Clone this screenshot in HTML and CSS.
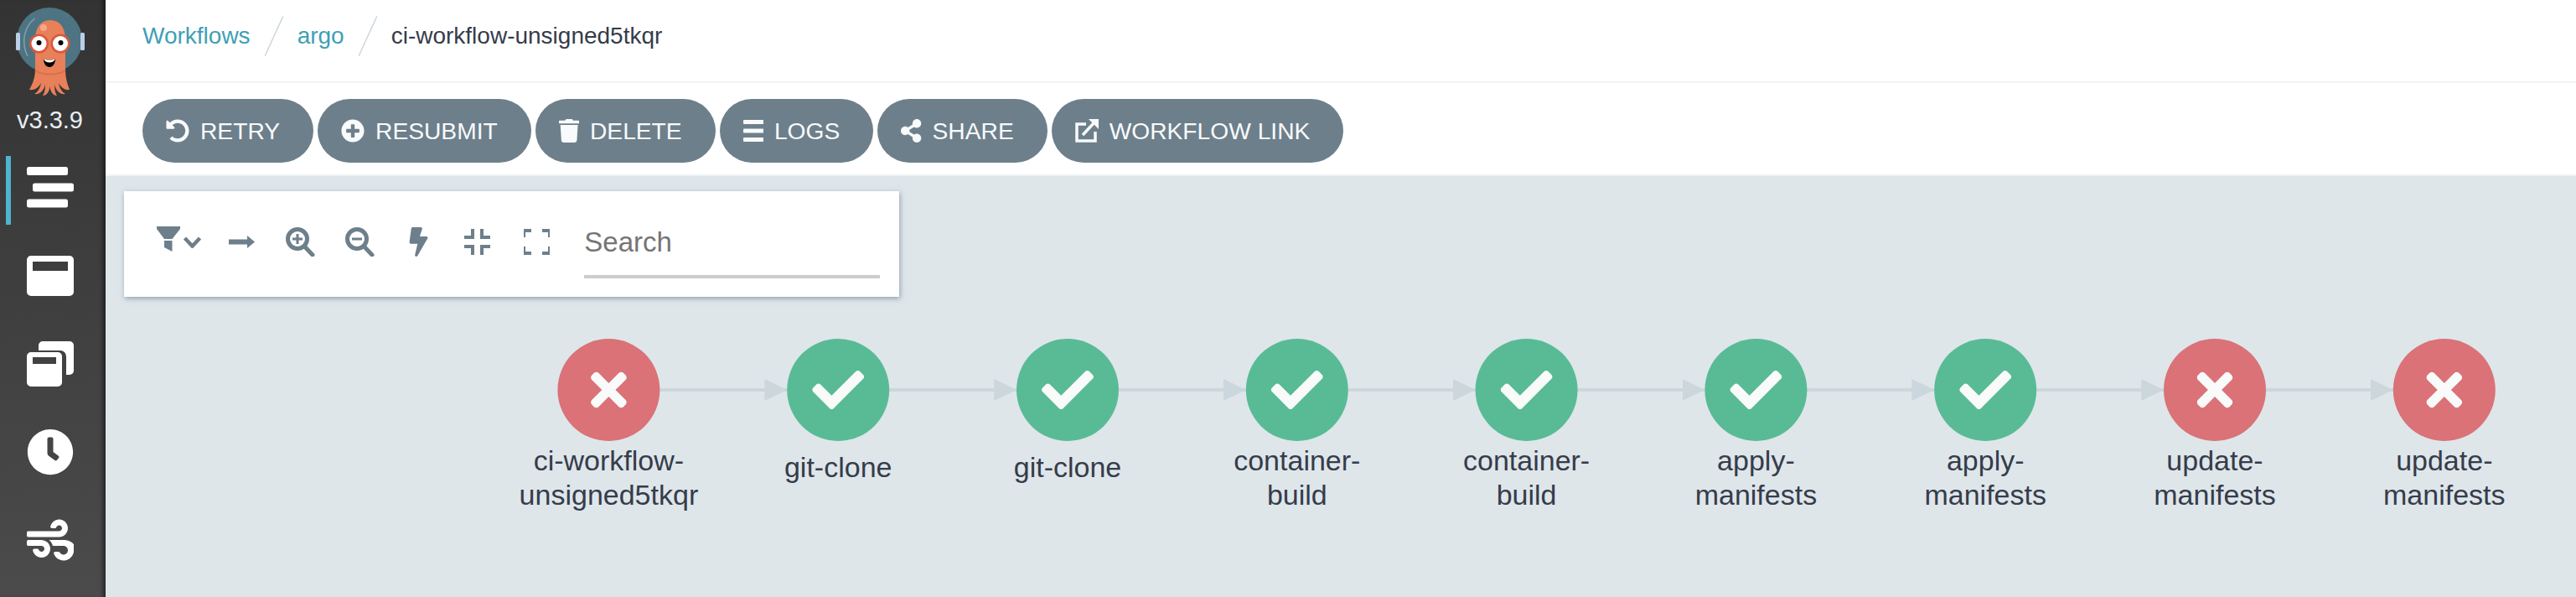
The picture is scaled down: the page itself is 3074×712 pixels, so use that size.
FILE: index.html
```html
<!DOCTYPE html>
<html lang="en">
<head>
<meta charset="utf-8">
<title>ci-workflow-unsigned5tkqr</title>
<link rel="stylesheet" href="styles.css">
</head>
<body>
<svg class="defs" width="0" height="0" aria-hidden="true">
  <symbol id="i-check" viewBox="0 0 512 512"><path d="M173.898 439.404l-166.4-166.4c-9.997-9.997-9.997-26.206 0-36.204l36.203-36.204c9.997-9.998 26.207-9.998 36.204 0L192 312.69 432.095 72.596c9.997-9.997 26.207-9.997 36.204 0l36.203 36.204c9.997 9.997 9.997 26.206 0 36.204l-294.4 294.401c-9.998 9.997-26.207 9.997-36.204-.001z"/></symbol>
  <symbol id="i-times" viewBox="0 0 352 512"><path d="M242.72 256l100.07-100.07c12.28-12.28 12.28-32.19 0-44.48l-22.24-22.24c-12.28-12.28-32.19-12.28-44.48 0L176 189.28 75.93 89.21c-12.28-12.28-32.19-12.28-44.48 0L9.21 111.45c-12.28 12.28-12.28 32.19 0 44.48L109.28 256 9.21 356.07c-12.28 12.28-12.28 32.19 0 44.48l22.24 22.24c12.28 12.28 32.2 12.28 44.48 0L176 322.72l100.07 100.07c12.28 12.28 32.2 12.28 44.48 0l22.24-22.24c12.28-12.28 12.28-32.19 0-44.48L242.72 256z"/></symbol>
  <marker id="arrow" markerUnits="userSpaceOnUse" markerWidth="27" markerHeight="26" refX="27" refY="13" orient="auto"><path class="arrow-head" d="M0 0L27 13L0 26z"/></marker>
</svg>
<div class="app">
  <aside class="sidebar">
    <svg class="logo" viewBox="0 0 120 120" aria-label="Argo logo">
      <circle class="l-helmet" cx="59" cy="48" r="39"/>
      <rect class="l-pad" x="19" y="39" width="5" height="21" rx="1.5"/>
      <rect class="l-pad" x="96" y="39" width="5" height="21" rx="1.5"/>
      <path class="l-shine" d="M41.5 22C29 32 24.500 50 33 67"/>
      <path class="l-body" d="M42 48C42 32 49 24 60 24S78 32 78 48V82C78 92 80 99 83 107C77 108 73 104 70 99C71 105 74 110 78 112C71 113 67 108 65 101C65 107 66 111 68 114C63 114 60 109 59.500 103C59 109 56 114 51 114C53 111 54 107 54 101C52 108 48 113 41 112C45 110 48 105 49 99C46 104 42 108 35 107C39 100 42 92 42 82Z"/>
      <path class="l-collar" d="M42 84C50 90 70 90 78 84"/>
      <ellipse class="l-glint" cx="52" cy="33" rx="4" ry="4"/>
      <circle class="l-eye-ring" cx="46.500" cy="52" r="11.500"/>
      <circle class="l-eye-ring" cx="72" cy="52" r="11.500"/>
      <circle class="l-eye" cx="46.500" cy="52" r="9"/>
      <circle class="l-eye" cx="72" cy="52" r="9"/>
      <circle class="l-pupil" cx="46.500" cy="51" r="3"/>
      <circle class="l-pupil" cx="72.500" cy="51" r="3"/>
      <path class="l-mouth" d="M52 70C56 72 62 72 66 70C66 76 63 80 59 80S52 76 52 70Z"/>
      <path class="l-teeth" d="M52 70C56 72 62 72 66 70C65 73 62 74.500 59 74.500S53 73 52 70Z"/>
    </svg>
    <div class="version">v3.3.9</div>
    <nav class="nav">
      <a class="nav-item is-active">
        <svg class="nav-icon" viewBox="0 0 56 49"><rect x="0" y="0" width="49" height="10" rx="2.500"/><rect x="7" y="19.500" width="49" height="10" rx="2.500"/><rect x="0" y="38.500" width="49" height="10" rx="2.500"/></svg>
      </a>
      <a class="nav-item">
        <svg class="nav-icon" viewBox="0 0 56 48"><path fill-rule="evenodd" d="M5 0H51A5 5 0 0 1 56 5V43A5 5 0 0 1 51 48H5A5 5 0 0 1 0 43V5A5 5 0 0 1 5 0ZM7 7V18H49V7Z"/></svg>
      </a>
      <a class="nav-item">
        <svg class="nav-icon" viewBox="0 0 56 54"><path d="M19 0H51A5 5 0 0 1 56 5V35A5 5 0 0 1 51 40H47V18A7 7 0 0 0 40 11H14V5A5 5 0 0 1 19 0Z"/><path fill-rule="evenodd" d="M5 13H37A5 5 0 0 1 42 18V49A5 5 0 0 1 37 54H5A5 5 0 0 1 0 49V18A5 5 0 0 1 5 13ZM7 19V27H35V19Z"/></svg>
      </a>
      <a class="nav-item">
        <svg class="nav-icon" viewBox="0 0 512 512"><path d="M256,8C119,8,8,119,8,256S119,504,256,504,504,393,504,256,393,8,256,8Zm92.49,313h0l-20,25a16,16,0,0,1-22.49,2.5h0l-67-49.72a40,40,0,0,1-15-31.23V112a16,16,0,0,1,16-16h32a16,16,0,0,1,16,16V256l58,42.5A16,16,0,0,1,348.49,321Z"/></svg>
      </a>
      <a class="nav-item">
        <svg class="nav-icon" viewBox="0 0 512 512"><path d="M156.7 256H16c-8.800 0-16 7.200-16 16v32c0 8.800 7.200 16 16 16h142.200c15.900 0 30.800 10.900 33.400 26.600 3.300 20-12.100 37.400-31.600 37.400-14.100 0-26.100-9.200-30.400-21.900-2.100-6.300-8.600-10.100-15.200-10.100H81.600c-9.800 0-17.700 8.800-15.900 18.400 8.600 44.100 47.600 77.600 94.200 77.600 57.100 0 103-50.100 95.300-108.600-6.300-47.700-50.700-82.400-98.600-82.400zM16 224h336c59.700 0 106.800-54.800 93.800-116.700-7.600-36.200-36.900-65.500-73.100-73.100-55.400-11.600-105.100 24.900-114.900 75.500-1.900 9.600 6.100 18.300 15.800 18.300h32.800c6.700 0 13.100-3.800 15.200-10.100C325.900 105.200 337.900 96 352 96c19.400 0 34.900 17.400 31.600 37.400-2.600 15.700-17.400 26.600-33.400 26.600H16c-8.800 0-16 7.200-16 16v32c0 8.800 7.200 16 16 16zm384 32H243.700c19.300 16.600 33.200 38.800 39.800 64H400c26.500 0 48 21.500 48 48s-21.500 48-48 48c-17.900 0-33.300-9.900-41.600-24.400-2.900-5-8.700-7.600-14.500-7.600h-33.800c-10.900 0-19 10.800-15.300 21.100 17.800 50.600 70.500 84.800 129.400 72.300 41.200-8.700 75.100-41.600 84.700-82.700C560.100 336.200 502.500 256 400 256z"/></svg>
      </a>
    </nav>
  </aside>
  <main class="main">
    <header class="breadcrumbs">
      <a class="crumb">Workflows</a>
      <svg class="slash" viewBox="0 0 22 48"><path d="M22 0L0 48"/></svg>
      <a class="crumb">argo</a>
      <svg class="slash" viewBox="0 0 22 48"><path d="M22 0L0 48"/></svg>
      <span class="crumb-current">ci-workflow-unsigned5tkqr</span>
    </header>
    <div class="toolbar">
      <button class="btn"><svg class="btn-icon" viewBox="0 0 512 512"><path d="M255.545 8c-66.269.119-126.438 26.233-170.860 68.685L48.971 40.971C33.851 25.851 8 36.559 8 57.941V192c0 13.255 10.745 24 24 24h134.059c21.382 0 32.090-25.851 16.971-40.971l-41.750-41.750c30.864-28.899 70.801-44.907 113.230-45.273 92.398-.798 170.283 73.977 169.484 169.442C423.236 348.009 349.816 424 256 424c-41.127 0-79.997-14.678-110.630-41.556-4.743-4.161-11.906-3.908-16.368.553L89.340 422.659c-4.872 4.872-4.631 12.815.482 17.433C133.798 479.813 192.074 504 256 504c136.966 0 247.999-111.033 248-247.998C504.001 119.193 392.354 7.755 255.545 8z"/></svg>RETRY</button>
      <button class="btn"><svg class="btn-icon" viewBox="0 0 512 512"><path d="M256 8C119 8 8 119 8 256s111 248 248 248 248-111 248-248S393 8 256 8zm144 276c0 6.600-5.400 12-12 12h-92v92c0 6.600-5.400 12-12 12h-56c-6.600 0-12-5.400-12-12v-92h-92c-6.600 0-12-5.400-12-12v-56c0-6.600 5.400-12 12-12h92v-92c0-6.600 5.400-12 12-12h56c6.600 0 12 5.400 12 12v92h92c6.600 0 12 5.400 12 12v56z"/></svg>RESUBMIT</button>
      <button class="btn"><svg class="btn-icon btn-icon-narrow" viewBox="0 0 448 512"><path d="M432 32H312l-9.400-18.700A24 24 0 0 0 281.100 0H166.800a23.720 23.720 0 0 0-21.400 13.300L136 32H16A16 16 0 0 0 0 48v32a16 16 0 0 0 16 16h416a16 16 0 0 0 16-16V48a16 16 0 0 0-16-16zM53.200 467a48 48 0 0 0 47.900 45h245.800a48 48 0 0 0 47.900-45L416 128H32z"/></svg>DELETE</button>
      <button class="btn"><svg class="btn-icon btn-icon-narrow" viewBox="0 0 26 28" preserveAspectRatio="none"><rect x="0" y="1" width="26" height="5" rx="1"/><rect x="0" y="11.500" width="26" height="5" rx="1"/><rect x="0" y="22" width="26" height="5" rx="1"/></svg>LOGS</button>
      <button class="btn"><svg class="btn-icon btn-icon-narrow" viewBox="0 0 448 512"><path d="M352 320c-22.608 0-43.387 7.819-59.790 20.895l-102.486-64.054a96.551 96.551 0 0 0 0-41.683l102.486-64.054C308.613 184.181 329.392 192 352 192c53.019 0 96-42.981 96-96S405.019 0 352 0s-96 42.981-96 96c0 7.158.79 14.130 2.276 20.841L155.790 180.895C139.387 167.819 118.608 160 96 160c-53.019 0-96 42.981-96 96s42.981 96 96 96c22.608 0 43.387-7.819 59.790-20.895l102.486 64.054A96.301 96.301 0 0 0 256 416c0 53.019 42.981 96 96 96s96-42.981 96-96-42.981-96-96-96z"/></svg>SHARE</button>
      <button class="btn"><svg class="btn-icon" viewBox="0 0 28 28"><path class="btn-stroke" d="M13 6H2V26H24V15"/><path class="btn-stroke" d="M9 19L23 4"/><path d="M16 0H28V12Z"/></svg>WORKFLOW LINK</button>
    </div>
    <section class="canvas">
      <div class="panel">
        <button class="tool tool-filter">
          <svg class="tool-funnel" viewBox="0 0 28 30"><path d="M0 0H28V3L18.500 15H9L0 3Z"/><path d="M9 17H18.500V30L9 25Z"/></svg>
          <svg class="tool-chevron" viewBox="0 0 23 15"><path d="M2.500 3L11.500 12.500L20.500 3"/></svg>
        </button>
        <button class="tool"><svg class="tool-arrow" viewBox="0 0 31 15"><path d="M0 4.500H22V0L31 7.500L22 15V10.500H0Z"/></svg></button>
        <button class="tool"><svg class="tool-icon" viewBox="0 0 35 35"><circle class="tool-stroke" cx="14" cy="14" r="11.500"/><path class="tool-stroke" d="M22.500 23L32 33"/><path class="tool-thin" d="M14 8V20M8 14H20"/></svg></button>
        <button class="tool"><svg class="tool-icon" viewBox="0 0 35 35"><circle class="tool-stroke" cx="14" cy="14" r="11.500"/><path class="tool-stroke" d="M22.500 23L32 33"/><path class="tool-thin" d="M8 14H20"/></svg></button>
        <button class="tool"><svg class="tool-bolt" viewBox="0 0 320 512"><path d="M296 160H180.600l42.600-129.800C227.200 15 215.700 0 200 0H56C44 0 33.800 8.900 32.200 20.800l-32 240C-2.700 274.100 8.400 288 24 288h118.700L96.600 482.500c-3.600 15.200 8 29.500 23.300 29.500 8.400 0 16.400-4.400 20.800-12l176-304c9.300-15.900-2.200-36-20.700-36z"/></svg></button>
        <button class="tool"><svg class="tool-frame" viewBox="0 0 31 31"><path class="tool-corner" d="M10 0V10H0M21 0V10H31M10 31V21H0M21 31V21H31"/></svg></button>
        <button class="tool"><svg class="tool-frame" viewBox="0 0 31 31"><path class="tool-corner" d="M0 10V2H9M31 10V2H22M0 21V29H9M31 21V29H22"/></svg></button>
        <input class="search" type="text" placeholder="Search">
      </div>
      <svg class="graph" viewBox="126 354 2948 358">
        <g class="edges">
          <path marker-end="url(#arrow)" d="M787 465H939.400"/>
          <path marker-end="url(#arrow)" d="M1061 465H1213.200"/>
          <path marker-end="url(#arrow)" d="M1335 465H1487"/>
          <path marker-end="url(#arrow)" d="M1609 465H1760.800"/>
          <path marker-end="url(#arrow)" d="M1882 465H2034.600"/>
          <path marker-end="url(#arrow)" d="M2156 465H2308.400"/>
          <path marker-end="url(#arrow)" d="M2430 465H2582.200"/>
          <path marker-end="url(#arrow)" d="M2704 465H2856"/>
        </g>
        <g class="node node-failed" transform="translate(726.400 465)"><circle r="61"/><use href="#i-times" x="-21.500" y="-31" width="43" height="62"/><text class="node-label" y="95.500">ci-workflow-</text><text class="node-label" y="137">unsigned5tkqr</text></g>
        <g class="node node-ok" transform="translate(1000.200 465)"><circle r="61"/><use href="#i-check" x="-31" y="-31" width="62" height="62"/><text class="node-label" y="104">git-clone</text></g>
        <g class="node node-ok" transform="translate(1274 465)"><circle r="61"/><use href="#i-check" x="-31" y="-31" width="62" height="62"/><text class="node-label" y="104">git-clone</text></g>
        <g class="node node-ok" transform="translate(1547.800 465)"><circle r="61"/><use href="#i-check" x="-31" y="-31" width="62" height="62"/><text class="node-label" y="95.500">container-</text><text class="node-label" y="137">build</text></g>
        <g class="node node-ok" transform="translate(1821.600 465)"><circle r="61"/><use href="#i-check" x="-31" y="-31" width="62" height="62"/><text class="node-label" y="95.500">container-</text><text class="node-label" y="137">build</text></g>
        <g class="node node-ok" transform="translate(2095.400 465)"><circle r="61"/><use href="#i-check" x="-31" y="-31" width="62" height="62"/><text class="node-label" y="95.500">apply-</text><text class="node-label" y="137">manifests</text></g>
        <g class="node node-ok" transform="translate(2369.200 465)"><circle r="61"/><use href="#i-check" x="-31" y="-31" width="62" height="62"/><text class="node-label" y="95.500">apply-</text><text class="node-label" y="137">manifests</text></g>
        <g class="node node-failed" transform="translate(2643 465)"><circle r="61"/><use href="#i-times" x="-21.500" y="-31" width="43" height="62"/><text class="node-label" y="95.500">update-</text><text class="node-label" y="137">manifests</text></g>
        <g class="node node-failed" transform="translate(2916.800 465)"><circle r="61"/><use href="#i-times" x="-21.500" y="-31" width="43" height="62"/><text class="node-label" y="95.500">update-</text><text class="node-label" y="137">manifests</text></g>
      </svg>
    </section>
  </main>
</div>
</body>
</html>
```

FILE: styles.css
```css
* { box-sizing: border-box; }
html, body { margin: 0; height: 100%; }
body {
  font-family: "Liberation Sans", Arial, sans-serif;
  color: #363c4a;
  background: #fff;
  overflow: hidden;
}
.defs { position: absolute; }
.app { display: flex; height: 712px; }

/* sidebar */
.sidebar {
  flex: 0 0 126px;
  background: linear-gradient(180deg, #333 0%, #4b4b4b 100%);
  box-shadow: inset -6px 0 5px -3px rgba(0, 0, 0, .5);
}
.logo { display: block; width: 120px; height: 120px; }
.version {
  height: 51px;
  padding-top: 6px;
  width: 119px;
  text-align: center;
  font-size: 29px;
  line-height: 34px;
  color: #e9eef1;
}
.nav { display: flex; flex-direction: column; }
.nav-item {
  position: relative;
  height: 105px;
  display: flex;
  align-items: center;
  padding-left: 32px;
}
.nav-item.is-active::before {
  content: "";
  position: absolute;
  left: 7px;
  top: 15px;
  width: 6px;
  height: 82px;
  background: #4fb4cd;
}
.nav-icon { width: 56px; height: auto; fill: #fff; display: block; }

.l-helmet { fill: #4e7483; }
.l-pad { fill: #b9d0e6; }
.l-shine { fill: none; stroke: #7fa3ad; stroke-width: 1.500; }
.l-body { fill: #e8805a; }
.l-collar { fill: none; stroke: #d96f4a; stroke-width: 2; }
.l-glint { fill: #f2a98e; }
.l-eye-ring { fill: #d9583d; }
.l-eye { fill: #fff; }
.l-pupil { fill: #000; }
.l-mouth { fill: #000; }
.l-teeth { fill: #fff; }

/* main */
.main { flex: 1; display: flex; flex-direction: column; min-width: 0; }
.breadcrumbs {
  height: 99px;
  border-bottom: 2px solid #eff3f6;
  padding: 0 0 12px 44px;
  display: flex;
  align-items: center;
  gap: 17px;
  font-size: 28px;
}
.crumb { color: #3f9fb4; }
.crumb-current { color: #363c4a; }
.slash { width: 22px; height: 48px; fill: none; stroke: #ccd6dd; stroke-width: 1.500; }

.toolbar {
  height: 111px;
  border-bottom: 2px solid #eff3f6;
  padding: 19px 0 0 44px;
  display: flex;
  align-items: flex-start;
  gap: 5px;
}
.btn {
  height: 76px;
  padding: 0 40px 0 28px;
  border: 0;
  border-radius: 38px;
  background: #6d7f8b;
  color: #f8fafb;
  font: 28.200px "Liberation Sans", Arial, sans-serif;
  display: flex;
  align-items: center;
  gap: 13px;
  white-space: nowrap;
}
.btn-icon { width: 28px; height: 28px; fill: #f8fafb; flex: none; }
.btn-icon-narrow { width: 24.300px; }
.btn-stroke { fill: none; stroke: #f8fafb; stroke-width: 3.500; }

/* canvas */
.canvas { flex: 1; background: #dee6ea; min-height: 0; }
.panel {
  margin: 18px 0 0 22px;
  width: 925px;
  height: 126px;
  padding: 34px 0 0 26px;
  background: #fff;
  box-shadow: 1px 2px 6px rgba(80, 100, 120, .55);
  display: flex;
  align-items: flex-start;
}
.tool {
  width: 70.300px;
  height: 36px;
  margin-top: 8px;
  padding: 0;
  border: 0;
  background: none;
  display: flex;
  align-items: center;
  justify-content: center;
}
.tool-filter {
  width: 79.500px;
  padding-left: 13px;
  justify-content: flex-start;
  gap: 3px;
}
.tool-funnel { width: 28px; height: 30px; fill: #6d7f8b; margin-top: -6px; }
.tool-chevron { width: 23px; height: 15px; fill: none; stroke: #6d7f8b; stroke-width: 4.500; }
.tool-arrow { width: 31px; height: 15px; fill: #6d7f8b; }
.tool-icon { width: 35px; height: 35px; }
.tool-stroke { fill: none; stroke: #6d7f8b; stroke-width: 5; stroke-linecap: round; }
.tool-thin { fill: none; stroke: #6d7f8b; stroke-width: 3; }
.tool-bolt { width: 23px; height: 35px; fill: #6d7f8b; }
.tool-frame { width: 31px; height: 31px; }
.tool-corner { fill: none; stroke: #6d7f8b; stroke-width: 4; }
.search {
  margin-left: 22px;
  width: 353px;
  height: 70px;
  padding: 0 0 12px;
  border: 0;
  border-bottom: 4px solid #ccc;
  outline: 0;
  background: none;
  font: 33px "Liberation Sans", Arial, sans-serif;
  color: #363c4a;
}

/* graph */
.graph { display: block; width: 2948px; height: 358px; }
.edges path { fill: none; stroke: #ccd6dd; stroke-width: 4; }
.arrow-head { fill: #ccd6dd; }
.node-ok circle { fill: #59bb95; }
.node-failed circle { fill: #da7277; }
.node use { fill: #f8fbfa; }
.node-label {
  font-size: 34px;
  fill: #363c4a;
  text-anchor: middle;
}
```
